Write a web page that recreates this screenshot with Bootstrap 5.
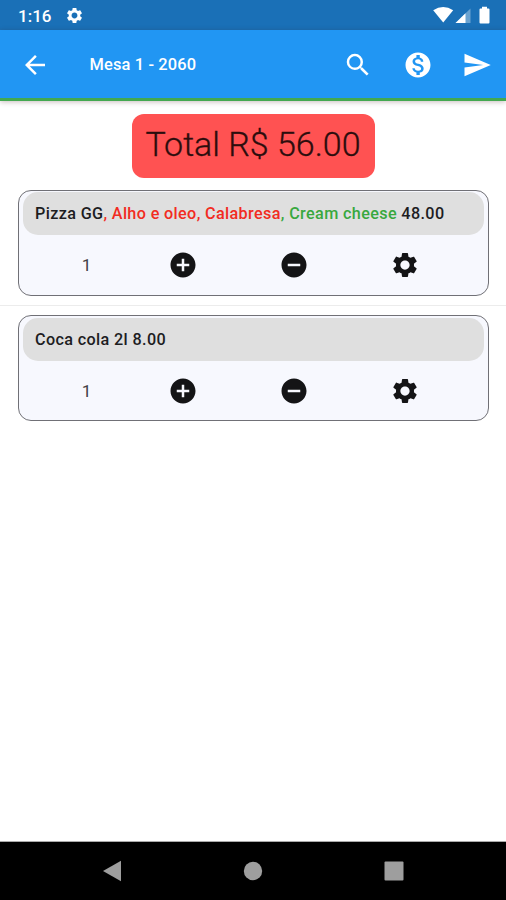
<!DOCTYPE html>
<html lang="pt-BR">
<head>
<meta charset="utf-8">
<meta name="viewport" content="width=device-width, initial-scale=1">
<title>Mesa 1 - 2060</title>
<link href="https://cdn.jsdelivr.net/npm/bootstrap@5.3.0/dist/css/bootstrap.min.css" rel="stylesheet">
<style>
  body { font-family: Roboto, "Liberation Sans", sans-serif; height: 900px; color: #1d1d1f; overflow: hidden; }
  svg { display: block; flex: none; }
  .status-bar { height: 30px; background: #1a70b7; padding: 0 15px 0 18px; }
  .clock { font-size: 17px; font-weight: 500; line-height: 30px; width: 46.5px; padding-top: 1px; }
  .app-bar { height: 71px; background: #2196f3; border-bottom: 3px solid #43a850; padding: 1px 14px 0 20px; box-shadow: 0 1px 5px rgba(60,20,20,.28); }
  .app-title { font-size: 16.4px; font-weight: 500; letter-spacing: .15px; margin-left: 39.5px; padding-top: 2px; }
  .ico { width: 30px; height: 30px; fill: currentColor; }
  .app-actions { gap: 29.5px; margin-right: -.4px; }
  .total-chip { width: 243px; height: 64px; margin: 13px 0 12px 132px; padding: 0 1px 3px 0; border-radius: 12px; background: #ff5252; color: #2c0d0d; font-size: 34px; font-weight: 300; white-space: nowrap; -webkit-text-stroke: .3px #2c0d0d; }
  .order-card { height: 106px; margin: 0 17px 0 18px; border: 1.3px solid #707076; border-radius: 13px; background: #f7f8fe; padding: 1px 4px; }
  .order-card.last { padding-top: 2px; }
  .order-head { height: 43px; border-radius: 15px; background: #dfdfdf; padding: 1px 12px 0; font-size: 16.2px; font-weight: 500; letter-spacing: .36px; white-space: nowrap; }
  .order-actions { height: 60px; padding: 0 23px; }
  .qty { width: 81px; padding-top: 2px; font-size: 17.2px; text-align: center; color: #424246; }
  .act { width: 111px; display: flex; justify-content: center; color: #141416; }
  .c-red { color: #f22c22; }
  .c-green { color: #38a83e; }
  .separator { height: 1px; background: #ececec; margin: 9px 0 9px; }
  .nav-keys { height: 58px; background: #000; box-shadow: 0 -1px 0 #aaa; padding: 0 102px; }
  .nav-keys svg { fill: #9e9e9e; }
</style>
<script src="https://cdn.jsdelivr.net/npm/bootstrap@5.3.0/dist/js/bootstrap.bundle.min.js"></script>
</head>
<body class="d-flex flex-column bg-white">
<svg width="0" height="0" class="position-absolute" aria-hidden="true">
  <symbol id="gear" viewBox="0 0 24 24"><path fill-rule="evenodd" d="M19.140 12.940c.04-.3.06-.61.06-.94 0-.32-.02-.64-.07-.94l2.030-1.580c.18-.14.23-.41.12-.61l-1.920-3.320c-.12-.22-.37-.29-.59-.22l-2.390.96c-.5-.38-1.030-.7-1.620-.94L14.400 2.810c-.04-.24-.24-.41-.48-.41h-3.840c-.24 0-.43.17-.47.41L9.250 5.350c-.59.24-1.130.57-1.620.94l-2.390-.96c-.22-.08-.47 0-.59.22L2.740 8.870c-.12.21-.08.47.12.61l2.030 1.580c-.05.3-.09.63-.09.94s.02.64.07.94l-2.030 1.580c-.18.14-.23.41-.12.61l1.920 3.320c.12.22.37.29.59.22l2.390-.96c.5.38 1.030.7 1.620.94l.36 2.540c.05.24.24.41.48.41h3.840c.24 0 .44-.17.47-.41l.36-2.540c.59-.24 1.130-.56 1.620-.94l2.390.96c.22.08.47 0 .59-.22l1.920-3.320c.12-.22.07-.47-.12-.61l-2.010-1.580zM12 15.700c-2.040 0-3.700-1.660-3.700-3.700s1.660-3.700 3.700-3.700 3.700 1.660 3.700 3.700-1.660 3.700-3.700 3.700z"/></symbol>
  <symbol id="plus" viewBox="0 0 24 24"><path d="M12 2C6.480 2 2 6.480 2 12s4.480 10 10 10 10-4.480 10-10S17.520 2 12 2zm5 11h-4v4h-2v-4H7v-2h4V7h2v4h4v2z"/></symbol>
  <symbol id="minus" viewBox="0 0 24 24"><path d="M12 2C6.480 2 2 6.480 2 12s4.480 10 10 10 10-4.480 10-10S17.520 2 12 2zm5 11H7v-2h10v2z"/></symbol>
</svg>

<div class="status-bar d-flex align-items-center text-white flex-shrink-0">
  <span class="clock">1:16</span>
  <svg width="19" height="19" fill="currentColor"><use href="#gear"/></svg>
  <svg class="ms-auto" width="58" height="30" viewBox="0 0 58 30" fill="#fff">
    <path d="M.2 10.200Q10.200 3.800 20.200 10.200L10.200 22.500z"/>
    <path d="M37.500 8.500V23H22.500z" opacity=".35"/><path d="M32.500 13.300V23H22.500z"/>
    <path d="M49 6.700h5v1.700h1.500q1 0 1 1V22.500q0 1-1 1h-8q-1 0-1-1V9.400q0-1 1-1H49z"/>
  </svg>
</div>

<header class="app-bar d-flex align-items-center text-white flex-shrink-0">
  <svg class="ico" viewBox="0 0 24 24"><path d="M20 11H7.830l5.590-5.590L12 4l-8 8 8 8 1.410-1.410L7.830 13H20v-2z"/></svg>
  <span class="app-title">Mesa 1 - 2060</span>
  <div class="app-actions d-flex ms-auto">
    <svg class="ico" viewBox="0 0 24 24"><path d="M15.500 14h-.79l-.28-.27A6.471 6.471 0 0 0 16 9.500 6.500 6.500 0 1 0 9.500 16c1.610 0 3.090-.59 4.230-1.570l.27.28v.79l5 4.990L20.490 19l-4.990-5zm-6 0C7.010 14 5 11.990 5 9.500S7.010 5 9.500 5 14 7.010 14 9.500 11.990 14 9.500 14z"/></svg>
    <svg class="ico" viewBox="0 0 24 24"><path d="M12 2C6.480 2 2 6.480 2 12s4.480 10 10 10 10-4.480 10-10S17.520 2 12 2zm1.410 16.090V20h-2.670v-1.930c-1.710-.36-3.160-1.460-3.270-3.400h1.960c.1 1.050.82 1.870 2.650 1.870 1.960 0 2.400-.98 2.400-1.590 0-.83-.44-1.610-2.670-2.140-2.480-.6-4.180-1.620-4.180-3.670 0-1.720 1.390-2.840 3.110-3.210V4h2.670v1.950c1.860.45 2.790 1.860 2.850 3.390H14.300c-.05-1.110-.64-1.870-2.220-1.870-1.500 0-2.400.68-2.400 1.640 0 .84.65 1.390 2.670 1.910s4.180 1.390 4.180 3.910c-.01 1.830-1.380 2.830-3.120 3.160z"/></svg>
    <svg class="ico" viewBox="0 0 24 24"><path d="M2.010 21L23 12 2.010 3 2 10l15 2-15 2z"/></svg>
  </div>
</header>

<main class="flex-grow-1">
  <div class="total-chip d-flex align-items-center justify-content-center">Total R$ 56.00</div>

  <section class="order-card">
    <div class="order-head d-flex align-items-center"><div>Pizza GG<span class="c-red">, Alho e oleo, Calabresa</span><span class="c-green">, Cream cheese</span> 48.00</div></div>
    <div class="order-actions d-flex align-items-center">
      <span class="qty">1</span>
      <span class="act"><svg class="ico"><use href="#plus"/></svg></span>
      <span class="act"><svg class="ico"><use href="#minus"/></svg></span>
      <span class="act"><svg class="ico"><use href="#gear"/></svg></span>
    </div>
  </section>

  <div class="separator"></div>

  <section class="order-card last">
    <div class="order-head d-flex align-items-center"><div>Coca cola 2l 8.00</div></div>
    <div class="order-actions d-flex align-items-center">
      <span class="qty">1</span>
      <span class="act"><svg class="ico"><use href="#plus"/></svg></span>
      <span class="act"><svg class="ico"><use href="#minus"/></svg></span>
      <span class="act"><svg class="ico"><use href="#gear"/></svg></span>
    </div>
  </section>
</main>

<footer class="nav-keys d-flex align-items-center justify-content-between flex-shrink-0">
  <svg width="20" height="22" viewBox="0 0 20 22"><path d="M1 11L19 .8V21.200z"/></svg>
  <svg width="20" height="20" viewBox="0 0 20 20"><circle cx="10" cy="10" r="9.200"/></svg>
  <svg width="20" height="20" viewBox="0 0 20 20"><rect x=".5" y=".5" width="19" height="19" rx="1"/></svg>
</footer>
</body>
</html>
